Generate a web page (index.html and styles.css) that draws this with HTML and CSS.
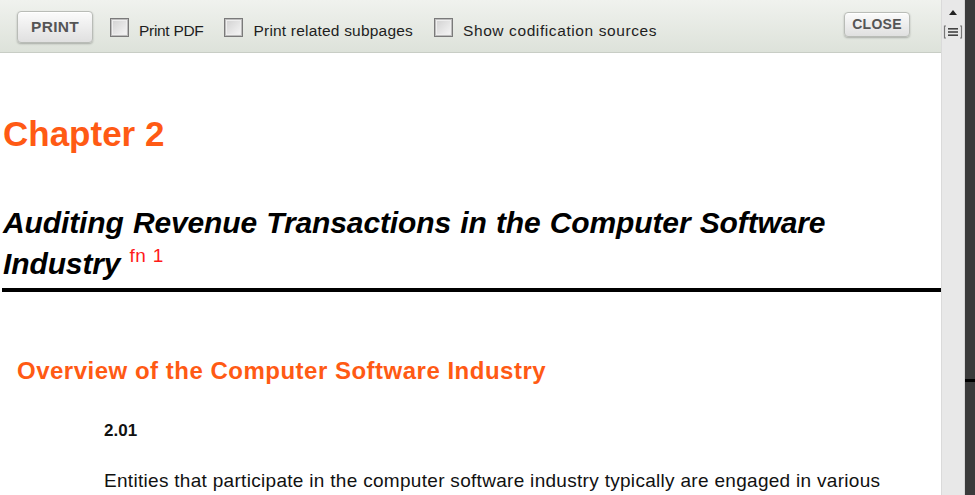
FILE: index.html
```html
<!DOCTYPE html>
<html>
<head>
<meta charset="utf-8">
<link rel="stylesheet" href="styles.css">
</head>
<body>
<div class="window">
  <div class="main">
    <div class="toolbar">
      <button class="btn btn-print">PRINT</button>
      <label class="opt opt-tight"><span class="box"></span>Print PDF</label>
      <label class="opt"><span class="box"></span>Print related subpages</label>
      <label class="opt opt-wide"><span class="box"></span>Show codification sources</label>
      <button class="btn btn-close">CLOSE</button>
    </div>
    <div class="content">
      <h1 class="chapter">Chapter 2</h1>
      <h2 class="title">Auditing Revenue Transactions in the Computer Software Industry <sup class="fn">fn 1</sup></h2>
      <div class="rule"></div>
      <h3 class="section">Overview of the Computer Software Industry</h3>
      <div class="para-num">2.01</div>
      <p class="para">Entities that participate in the computer software industry typically are engaged in various</p>
    </div>
  </div>
  <div class="scrollbar">
    <svg class="arrow" width="10" height="6" viewBox="0 0 10 6"><path d="M1 6 L5 1 L9 6 Z" fill="#222"/></svg>
    <svg class="grip" width="20" height="14" viewBox="0 0 20 14">
      <path d="M3 1 H1.5 V13 H3" fill="none" stroke="#777" stroke-width="1.2"/>
      <path d="M17 1 H18.5 V13 H17" fill="none" stroke="#777" stroke-width="1.2"/>
      <rect x="5" y="3" width="10" height="1.6" fill="#444"/>
      <rect x="5" y="6.2" width="10" height="1.6" fill="#444"/>
      <rect x="5" y="9.4" width="10" height="1.6" fill="#444"/>
    </svg>
  </div>
  <div class="edge"><span class="mark"></span></div>
</div>
</body>
</html>
```
FILE: styles.css
```css
html, body {
  margin: 0;
  padding: 0;
  height: 100%;
  overflow: hidden;
  background: #fff;
}
.window {
  display: flex;
  height: 495px;
  width: 975px;
  font-family: "Liberation Sans", Arial, sans-serif;
}
.main {
  width: 941px;
  flex: none;
  display: flex;
  flex-direction: column;
  overflow: hidden;
}
.toolbar {
  height: 53px;
  flex: none;
  display: flex;
  align-items: center;
  padding-left: 17px;
  padding-right: 31px;
  background: linear-gradient(#f0f2ee, #dde2da);
  border-bottom: 1px solid #c8cdc5;
  box-sizing: border-box;
}
.btn {
  font-family: "Liberation Sans", Arial, sans-serif;
  font-weight: bold;
  color: #555;
  border: 1px solid #b9bcb7;
  border-radius: 4px;
  background: linear-gradient(#fbfbfb, #e0e0e0);
  box-shadow: 0 1px 2px rgba(0,0,0,0.25), inset 0 1px 0 #fff;
  padding: 0;
  cursor: pointer;
}
.btn-print {
  width: 76px;
  height: 32px;
  font-size: 15.5px;
  letter-spacing: 0.3px;
  margin-right: 17px;
  margin-top: 2px;
}
.btn-close {
  width: 66px;
  height: 25px;
  font-size: 14px;
  letter-spacing: 0.3px;
  margin-left: auto;
  margin-top: -4px;
}
.opt {
  display: flex;
  align-items: center;
  font-size: 15.5px;
  letter-spacing: 0.2px;
  color: #1e1e1e;
  margin-right: 21px;
  margin-top: 9px;
}
.opt-tight {
  letter-spacing: -0.3px;
}
.opt-wide {
  letter-spacing: 0.6px;
}
.box {
  width: 19px;
  height: 19px;
  box-sizing: border-box;
  border: 1px solid #7a7a7a;
  background: linear-gradient(135deg, #cfcfcf, #f8f8f8);
  box-shadow: inset 0 0 0 1px #bdbdbd, inset 0 0 0 2px #eee;
  margin-right: 10px;
  margin-top: -7px;
}
.content {
  padding: 0 0 0 2px;
}
.chapter {
  margin: 61px 0 0 1px;
  font-size: 35px;
  line-height: 40px;
  color: #ff5a14;
  font-weight: bold;
}
.title {
  margin: 48px 0 0 1px;
  max-width: 880px;
  font-size: 30px;
  letter-spacing: -0.12px;
  word-spacing: 1px;
  line-height: 41px;
  font-style: italic;
  font-weight: bold;
  color: #000;
}
.fn {
  color: #ff1a1a;
  font-style: normal;
  font-weight: normal;
  font-size: 19px;
  letter-spacing: 0.3px;
  vertical-align: 12px;
  line-height: 0;
}
.rule {
  height: 4px;
  background: #000;
  margin-top: 4px;
}
.section {
  margin: 65px 0 0 15px;
  font-size: 24px;
  letter-spacing: 0.5px;
  line-height: 28px;
  color: #ff5a14;
  font-weight: bold;
}
.para-num {
  margin: 36px 0 0 102px;
  font-size: 17px;
  font-weight: bold;
  color: #111;
}
.para {
  margin: 29px 0 0 102px;
  font-size: 19px;
  letter-spacing: 0.3px;
  color: #111;
}
.scrollbar {
  width: 24px;
  flex: none;
  background: #e8e8e8;
  border-left: 1px solid #dadada;
  border-right: 1px solid #d6d6d6;
  box-sizing: border-box;
  display: flex;
  flex-direction: column;
  align-items: center;
}
.arrow {
  margin-top: 9px;
}
.grip {
  margin-top: 10px;
}
.edge {
  flex: 1;
  background: #3b3b3b;
  position: relative;
}
.mark {
  position: absolute;
  left: 0;
  right: 0;
  top: 379px;
  height: 3px;
  background: #000;
}
```
